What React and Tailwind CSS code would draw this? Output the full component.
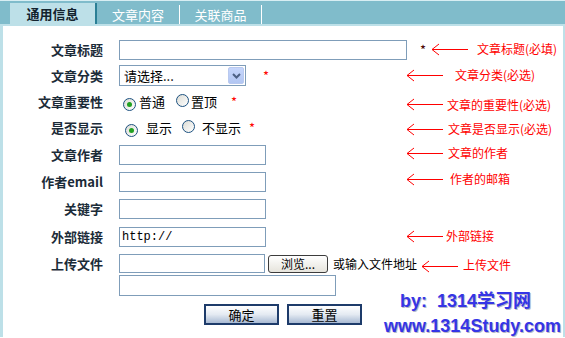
import React from 'react'

const cjk = "font-['SimSun','Noto_Sans_CJK_SC',sans-serif]"

/* ─── little drawings ─────────────────────────────────────── */
function Arrow({ w = 37 }) {
  return (
    <svg width={w} height="13" viewBox={`0 0 ${w} 13`} className="block">
      <line x1="1" y1="6.5" x2={w} y2="6.5" stroke="#ff0000" strokeWidth="1" />
      <line x1="1" y1="6.5" x2="8" y2="1" stroke="#ff0000" strokeWidth="1" />
      <line x1="1" y1="6.5" x2="8" y2="12" stroke="#ff0000" strokeWidth="1" />
    </svg>
  )
}

function Radio({ checked }) {
  return (
    <span className="relative inline-flex w-[13px] h-[13px] rounded-full border border-[#1c5180] bg-gradient-to-br from-[#dcdcd5] to-white items-center justify-center">
      {checked && <span className="w-[5px] h-[5px] rounded-full bg-[#21a121]" />}
    </span>
  )
}

function Field({ className = 'w-[147px]', children }) {
  return (
    <div className={`h-[20px] border border-[#7f9db9] bg-white flex items-center px-[2px] ${className}`}>
      {children}
    </div>
  )
}

function Row({ label, h, children }) {
  return (
    <div className={`flex items-center ${h}`}>
      <div className="w-[100px] text-right font-bold text-[13px] text-[#1b2b38]">{label}</div>
      <div className="ml-[16px] flex items-center">{children}</div>
    </div>
  )
}

const notes = [
  { arrow: 'left-[431px] top-[43px]', text: 'left-[477px] top-[40px]', label: '文章标题(必填)' },
  { arrow: 'left-[406px] top-[69px]', text: 'left-[455px] top-[66px]', label: '文章分类(必选)' },
  { arrow: 'left-[406px] top-[98px]', text: 'left-[447px] top-[96px]', label: '文章的重要性(必选)' },
  { arrow: 'left-[406px] top-[123px]', text: 'left-[448px] top-[120px]', label: '文章是否显示(必选)' },
  { arrow: 'left-[406px] top-[147px]', text: 'left-[448px] top-[144px]', label: '文章的作者' },
  { arrow: 'left-[406px] top-[173px]', text: 'left-[450px] top-[170px]', label: '作者的邮箱' },
  { arrow: 'left-[406px] top-[230px]', text: 'left-[446px] top-[227px]', label: '外部链接' },
  { arrow: 'left-[421px] top-[260px]', text: 'left-[463px] top-[256px]', label: '上传文件' },
]

export default function App() {
  return (
    <div className={`relative w-[565px] h-[338px] bg-white overflow-hidden ${cjk} text-[13px] text-black`}>
      {/* Tabs */}
      <div className="h-[24px] bg-[#80bccb] border-t border-[#d8eef3] flex items-end pl-[10px]">
        <div className="w-[87px] h-[21px] bg-[#bde0e8] border-r-2 border-[#2a7f95] flex items-center justify-center font-bold text-[13px] text-[#14232e]">
          通用信息
        </div>
        <div className="w-[82px] h-[19px] flex items-center justify-center text-white">文章内容</div>
        <div className="w-px h-[19px] bg-white" />
        <div className="w-[81px] h-[19px] flex items-center justify-center text-white">关联商品</div>
        <div className="w-px h-[19px] bg-white" />
      </div>
      <div className="h-[2px] bg-[#bde0e8]" />

      {/* Form */}
      <div className="h-[311px] border-l-[3px] border-r-2 border-[#bde0e8] pt-[11px]">
        <Row label="文章标题" h="h-[25px]">
          <Field className="w-[288px]" />
          <span className="ml-[13px] text-[#4a0000]">*</span>
        </Row>
        <Row label="文章分类" h="h-[27px]">
          <div className="w-[127px] h-[21px] border border-[#7f9db9] flex items-center justify-between pl-[4px] pr-px">
            <span>请选择...</span>
            <span className="w-[16px] h-[17px] rounded-[2px] bg-gradient-to-b from-[#c6d6fc] to-[#b2c6f2] border border-[#b9c9ef] flex items-center justify-center">
              <svg width="9" height="6" viewBox="0 0 9 6"><path d="M1 1l3.5 3.5L8 1" fill="none" stroke="#4d6185" strokeWidth="2" /></svg>
            </span>
          </div>
          <span className="ml-[17px] text-[#ff0000]">*</span>
        </Row>
        <Row label="文章重要性" h="h-[26px]">
          <span className="ml-[4px]"><Radio checked /></span>
          <span className="ml-[3px]">普通</span>
          <span className="ml-[11px]"><Radio /></span>
          <span className="ml-[2px]">置顶</span>
          <span className="ml-[14px] text-[#ff0000]">*</span>
        </Row>
        <Row label="是否显示" h="h-[26px]">
          <span className="ml-[6px]"><Radio checked /></span>
          <span className="ml-[8px]">显示</span>
          <span className="ml-[10px]"><Radio /></span>
          <span className="ml-[7px]">不显示</span>
          <span className="ml-[8px] text-[#ff0000]">*</span>
        </Row>
        <Row label="文章作者" h="h-[27px]"><Field /></Row>
        <Row label="作者email" h="h-[27px]"><Field /></Row>
        <Row label="关键字" h="h-[28px]"><Field /></Row>
        <Row label="外部链接" h="h-[27px]">
          <Field>
            <span className="font-['Liberation_Mono',monospace] text-[12px]">http://</span>
          </Field>
        </Row>
        <div className="flex items-start pt-[4px]">
          <div className="w-[100px] text-right font-bold text-[13px] text-[#1b2b38] leading-[19px]">上传文件</div>
          <div className="ml-[16px] flex flex-col gap-[2px]">
            <div className="flex items-center">
              <Field className="w-[146px] !h-[19px]" />
              <button className="ml-[3px] w-[60px] h-[18px] rounded-[3px] border border-[#3c3c3c] bg-gradient-to-b from-white to-[#e6e4dc] text-[12px] leading-none flex items-center justify-center">
                浏览...
              </button>
              <span className="ml-[5px] text-[12px]">或输入文件地址</span>
            </div>
            <Field className="w-[217px] !h-[21px]" />
          </div>
        </div>
        <div className="flex gap-[8px] pl-[201px] pt-[8px]">
          <button className="w-[75px] h-[21px] border-2 border-[#1d3b6a] bg-gradient-to-b from-white via-[#e4eaf2] to-[#a9bad3] text-[13px] leading-none">确定</button>
          <button className="w-[75px] h-[21px] border-2 border-[#1d3b6a] bg-gradient-to-b from-white via-[#e4eaf2] to-[#a9bad3] text-[13px] leading-none">重置</button>
        </div>
      </div>

      {/* Red annotations over the form */}
      {notes.map(n => (
        <React.Fragment key={n.label}>
          <div className={`absolute ${n.arrow}`}><Arrow /></div>
          <div className={`absolute ${n.text} text-[12px] leading-[18px] text-[#ff0000]`}>{n.label}</div>
        </React.Fragment>
      ))}

      {/* Watermark */}
      <div className="absolute left-[384px] top-[289px] text-right font-['Liberation_Sans','Noto_Sans_CJK_SC',sans-serif] font-bold text-[18px] leading-[25px] text-[#3535e6] [text-shadow:1px_1px_0_#b8b8c8]">
        <div className="pl-[16px] text-left">by:&nbsp; 1314学习网</div>
        <div>www.1314Study.com</div>
      </div>
    </div>
  )
}
